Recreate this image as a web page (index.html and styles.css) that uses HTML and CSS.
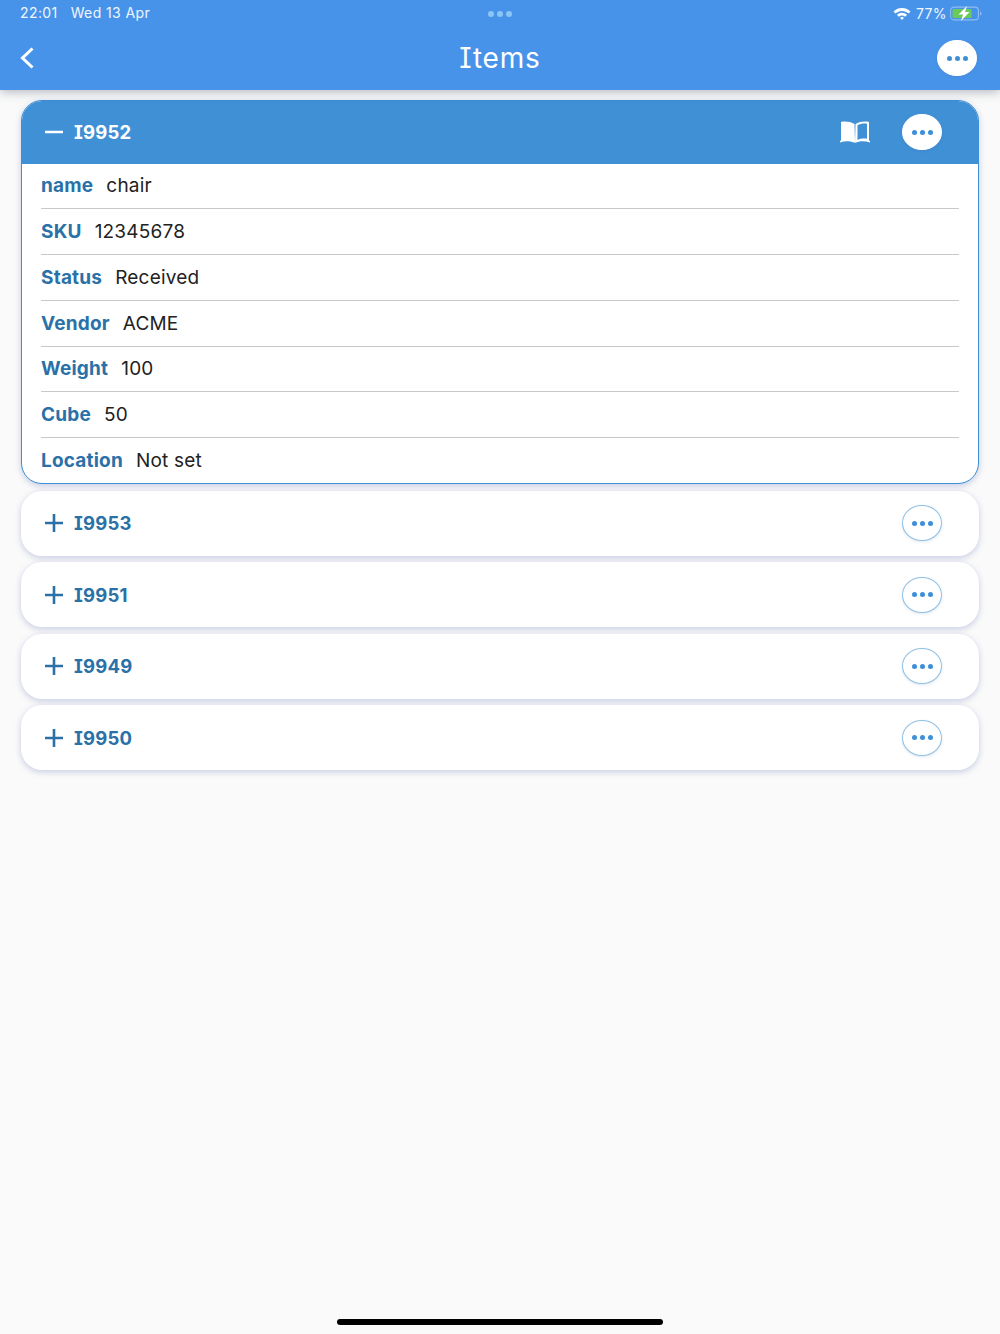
FILE: index.html
```html
<!DOCTYPE html>
<html lang="en">
<head>
<meta charset="utf-8">
<title>Items</title>
<link rel="stylesheet" href="styles.css">
</head>
<body>
<header class="appbar">
  <div class="status">
    <div class="status-left"><span>22:01</span><span>Wed 13 Apr</span></div>
    <div class="status-dots"><i></i><i></i><i></i></div>
    <div class="status-right">
      <svg class="wifi" viewBox="0 0 18 13" width="18" height="13"><path d="M.5 4.400C5.300-.2 12.700-.2 17.500 4.400L15.600 6.500C11.800 3 6.200 3 2.400 6.500Z" fill="#fff"/><path d="M3.900 7.700C6.900 5 11.100 5 14.100 7.700L12.200 9.700C10.300 8 7.700 8 5.800 9.700Z" fill="#fff"/><path d="M7 10.800C8.200 9.700 9.800 9.700 11 10.800L9 13Z" fill="#fff"/></svg>
      <span>77%</span>
      <svg class="battery" viewBox="0 0 32 15" width="32" height="15"><rect x=".6" y="1.100" width="27.800" height="12.800" rx="3.500" fill="none" stroke="#8fbdf2" stroke-width="1.100"/><rect x="2.500" y="3" width="19" height="9" rx="1.500" fill="#6cc95c"/><path d="M30 5.500v4c1-.3 1.500-1 1.500-2S31 5.800 30 5.500Z" fill="#8fbdf2"/><path d="M17 0 8.500 8.500h4.500L11 15 19.500 6h-4.500Z" fill="#fff"/></svg>
    </div>
  </div>
  <div class="titlebar">
    <svg class="back" viewBox="0 0 16 24" width="16" height="24"><path d="M13.500 2.500 3.500 12l10 9.500" fill="none" stroke="#fff" stroke-width="3"/></svg>
    <h1>Items</h1>
    <button class="more solid"><i></i><i></i><i></i></button>
  </div>
</header>
<main class="list">
  <section class="card open">
    <div class="card-head">
      <svg class="toggle" viewBox="0 0 18 18" width="18" height="18"><path d="M0 9h18" stroke="#fff" stroke-width="2.600"/></svg>
      <span class="card-id">I9952</span>
      <svg class="book" viewBox="0 0 30 22" width="30" height="22"><path d="M14.500 3C11 .8 5 0 1 1V19.500L0 20V21.500C5 19.500 10.500 19.800 15 21.800L14.500 3Z" fill="#fff"/><path fill-rule="evenodd" d="M15.500 3C19 .8 25 0 29 1V19.500L30 20V21.500C25 19.500 19.500 19.800 15 21.800L15.500 3ZM17.500 4.200C20 2.800 24 2.300 27 2.800V17.800C23.500 17.300 20 17.800 17.500 19Z" fill="#fff"/></svg>
      <button class="more solid"><i></i><i></i><i></i></button>
    </div>
    <div class="fields">
      <div class="field"><b>name</b><span>chair</span></div>
      <div class="field"><b>SKU</b><span>12345678</span></div>
      <div class="field"><b>Status</b><span>Received</span></div>
      <div class="field"><b>Vendor</b><span>ACME</span></div>
      <div class="field"><b>Weight</b><span>100</span></div>
      <div class="field"><b>Cube</b><span>50</span></div>
      <div class="field"><b>Location</b><span>Not set</span></div>
    </div>
  </section>
  <section class="card">
    <div class="card-head">
      <svg class="toggle" viewBox="0 0 18 18" width="18" height="18"><path d="M0 9h18M9 0v18" stroke="#2a71a8" stroke-width="2.600"/></svg>
      <span class="card-id">I9953</span>
      <button class="more"><i></i><i></i><i></i></button>
    </div>
  </section>
  <section class="card">
    <div class="card-head">
      <svg class="toggle" viewBox="0 0 18 18" width="18" height="18"><path d="M0 9h18M9 0v18" stroke="#2a71a8" stroke-width="2.600"/></svg>
      <span class="card-id">I9951</span>
      <button class="more"><i></i><i></i><i></i></button>
    </div>
  </section>
  <section class="card">
    <div class="card-head">
      <svg class="toggle" viewBox="0 0 18 18" width="18" height="18"><path d="M0 9h18M9 0v18" stroke="#2a71a8" stroke-width="2.600"/></svg>
      <span class="card-id">I9949</span>
      <button class="more"><i></i><i></i><i></i></button>
    </div>
  </section>
  <section class="card">
    <div class="card-head">
      <svg class="toggle" viewBox="0 0 18 18" width="18" height="18"><path d="M0 9h18M9 0v18" stroke="#2a71a8" stroke-width="2.600"/></svg>
      <span class="card-id">I9950</span>
      <button class="more"><i></i><i></i><i></i></button>
    </div>
  </section>
</main>
<div class="home-bar"></div>
</body>
</html>
```
FILE: styles.css
```css
* { box-sizing: border-box; }
html, body { height: 100%; }
body {
  margin: 0;
  height: 1334px;
  overflow: hidden;
  position: relative;
  background: #fafafa;
  font-family: Inter, "Liberation Sans", sans-serif;
  font-feature-settings: "cv08" 1;
  color: #222;
}
.appbar {
  height: 90px;
  background: #4893ea;
  color: #fff;
  box-shadow: 0 2px 10px rgba(40, 60, 90, .35);
  position: relative;
  z-index: 2;
}
.status {
  height: 26px;
  padding: 0 18px 0 20px;
  display: grid;
  grid-template-columns: 1fr auto 1fr;
  align-items: center;
  font-size: 14px;
  letter-spacing: .4px;
  color: #f0f6fe;
}
.status-left { display: flex; gap: 13px; margin-bottom: 1px; }
.status-dots { display: flex; gap: 3px; margin: 2px 0 0 -2px; }
.status-dots i { width: 6px; height: 6px; border-radius: 50%; background: #8cc4f5; }
.status-right { display: flex; justify-content: flex-end; align-items: center; gap: 5px; }
.battery { margin-left: -2px; }
.titlebar {
  height: 64px;
  padding: 0 23px 0 19px;
  display: flex;
  align-items: center;
  justify-content: space-between;
  position: relative;
}
.titlebar h1 {
  position: absolute;
  left: 0;
  right: 0;
  margin: 0;
  text-align: center;
  font-size: 28px;
  font-weight: 400;
  letter-spacing: .8px;
}
.back { display: block; }
.more {
  width: 40px;
  height: 36px;
  padding: 0;
  border: 1px solid #8fc1e6;
  border-radius: 50%;
  background: #fff;
  display: flex;
  align-items: center;
  justify-content: center;
  gap: 3px;
  flex: none;
  box-shadow: 0 1px 3px rgba(60, 80, 120, .15);
}
.more.solid { border-color: #fff; }
.more i { width: 5px; height: 5px; border-radius: 50%; background: #3d8fd6; }
.list {
  padding: 10px 21px 0;
  display: flex;
  flex-direction: column;
  gap: 6.500px;
}
.card {
  background: #fff;
  border-radius: 21px;
  box-shadow: 0 2px 6px rgba(90, 110, 180, .32);
}
.card.open {
  border: 1.500px solid #3d8fd6;
  overflow: hidden;
}
.card-head {
  height: 65px;
  padding: 0 37px 0 24px;
  display: flex;
  align-items: center;
  gap: 11px;
  color: #2a71a8;
}
.open .card-head {
  height: 62.500px;
  padding: 0 36px 0 23px;
  background: #4090d6;
  color: #fff;
}
.card-id {
  flex: 1;
  font-size: 18.500px;
  font-weight: 700;
  letter-spacing: .2px;
}
.book { margin-right: 21px; }
.fields { padding: 0 19px; }
.field {
  height: 45.750px;
  display: flex;
  align-items: center;
  gap: 13px;
  font-size: 19px;
  letter-spacing: .2px;
  border-bottom: 1.300px solid #c8c8c8;
}
.field:last-child { border-bottom: 0; height: 45px; }
.field b { color: #2a71a8; font-weight: 700; }
.home-bar {
  position: absolute;
  left: 337px;
  top: 1319px;
  width: 326px;
  height: 6px;
  border-radius: 3px;
  background: #000;
}
```
